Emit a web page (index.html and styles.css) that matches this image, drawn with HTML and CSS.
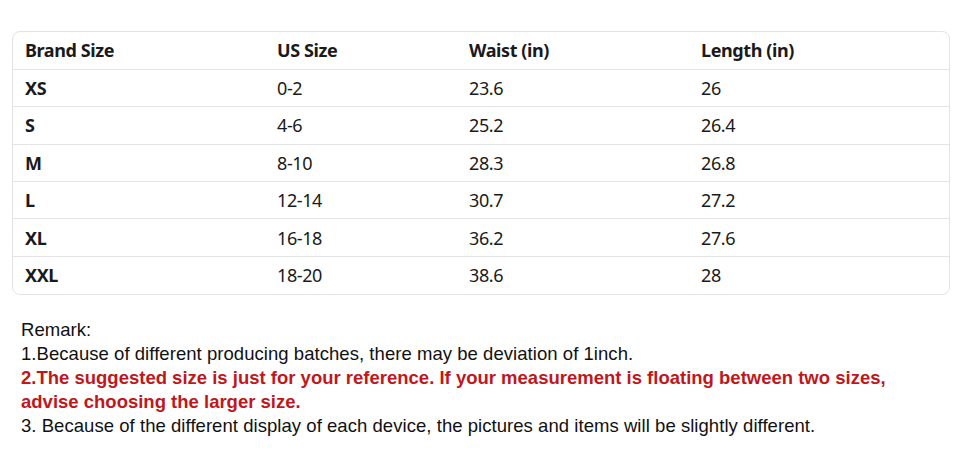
FILE: index.html
```html
<!DOCTYPE html>
<html>
<head>
<meta charset="utf-8">
<link rel="stylesheet" href="styles.css">
</head>
<body>
<div class="page">
  <div class="table-card">
    <table class="size-table">
      <thead>
        <tr><th class="c1">Brand Size</th><th class="c2">US Size</th><th class="c3">Waist (in)</th><th class="c4">Length (in)</th></tr>
      </thead>
      <tbody>
        <tr><td class="b">XS</td><td>0-2</td><td>23.6</td><td>26</td></tr>
        <tr><td class="b">S</td><td>4-6</td><td>25.2</td><td>26.4</td></tr>
        <tr><td class="b">M</td><td>8-10</td><td>28.3</td><td>26.8</td></tr>
        <tr><td class="b">L</td><td>12-14</td><td>30.7</td><td>27.2</td></tr>
        <tr><td class="b">XL</td><td>16-18</td><td>36.2</td><td>27.6</td></tr>
        <tr><td class="b">XXL</td><td>18-20</td><td>38.6</td><td>28</td></tr>
      </tbody>
    </table>
  </div>
  <div class="remarks">
    <p>Remark:</p>
    <p>1.Because of different producing batches, there may be deviation of 1inch.</p>
    <p class="red">2.The suggested size is just for your reference. If your measurement is floating between two sizes, advise choosing the larger size.</p>
    <p>3. Because of the different display of each device, the pictures and items will be slightly different.</p>
  </div>
</div>
</body>
</html>
```

FILE: styles.css
```css
html, body {
  margin: 0;
  padding: 0;
  background: #ffffff;
}
.page {
  width: 960px;
  height: 475px;
  padding: 31px 12px 0 12px;
  box-sizing: border-box;
}
.table-card {
  width: 936px;
  border: 1px solid #e3e3e3;
  border-radius: 8px;
  overflow: hidden;
}
.size-table {
  width: 100%;
  border-collapse: collapse;
  font-family: "Noto Sans", "Open Sans", sans-serif;
  font-size: 18px;
  letter-spacing: -0.4px;
  color: #1a1a1a;
}
.size-table th, .size-table td {
  text-align: left;
  padding: 0 0 0 12px;
  height: 37.4px;
  box-sizing: border-box;
  font-weight: 400;
}
.size-table th {
  font-weight: 700;
  padding-bottom: 1px;
}
.size-table tbody td {
  border-top: 1px solid #e4e4e4;
}
.size-table td.b { font-weight: 700; }
.c1 { width: 252px; }
.c2 { width: 192px; }
.c3 { width: 232px; }
.remarks {
  margin-top: 23px;
  padding-left: 9px;
  font-family: "Liberation Sans", Arial, sans-serif;
  font-size: 18.5px;
  line-height: 24px;
  letter-spacing: 0.05px;
  color: #111;
}
.remarks p {
  margin: 0;
}
.remarks .red {
  color: #c0171c;
  font-weight: 700;
  letter-spacing: 0;
  width: 890px;
}
```
